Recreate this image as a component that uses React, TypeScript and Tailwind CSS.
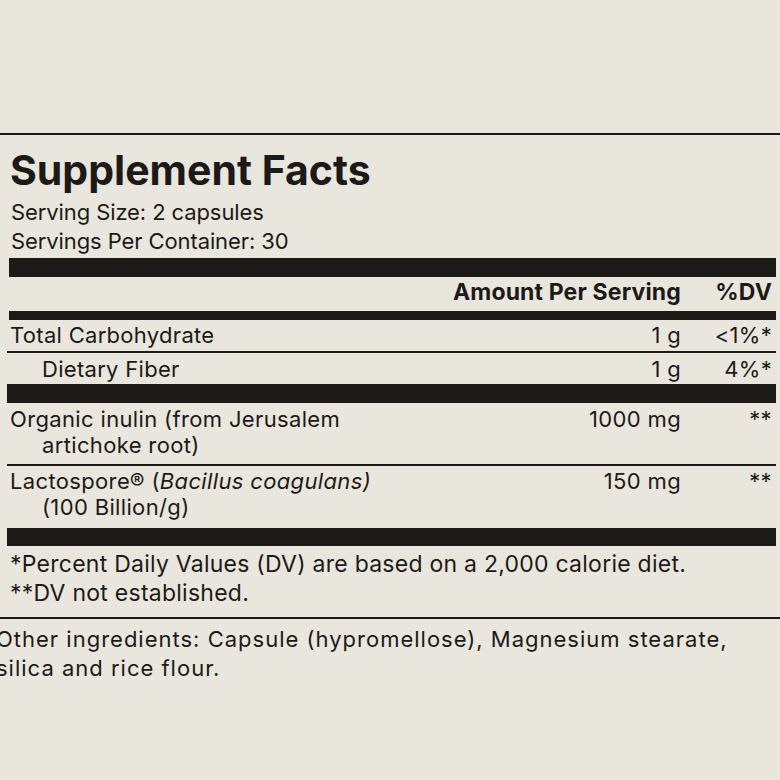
const INK = "text-[#1c1a17]";

function NutrientRow({
  name,
  amount,
  dv,
  indent,
  pad,
}: {
  name: string;
  amount: string;
  dv: string;
  indent?: boolean;
  pad: string;
}) {
  return (
    <div className={`flex h-[31px] ${pad} text-[22px] leading-[31px] tracking-[0.3px]`}>
      <div className={`flex-1 ${indent ? "pl-[33px]" : "pl-[1px]"}`}>{name}</div>
      <div className="text-right">{amount}</div>
      <div className="w-[95px] pr-[4px] text-right">{dv}</div>
    </div>
  );
}

function TwoLineRow({
  first,
  second,
  amount,
  h,
  pad,
}: {
  first: React.ReactNode;
  second: React.ReactNode;
  amount: string;
  h: string;
  pad: string;
}) {
  return (
    <div className={`flex ${h} ${pad} text-[22px] leading-[26px] tracking-[0.35px]`}>
      <div className="flex-1 pl-[1px]">
        <div>{first}</div>
        <div className="pl-[32px]">{second}</div>
      </div>
      <div className="text-right">{amount}</div>
      <div className="w-[95px] pr-[4px] text-right">**</div>
    </div>
  );
}

export default function App() {
  return (
    <div
      className={`w-[780px] h-[780px] overflow-hidden bg-[#e9e6dd] ${INK}`}
      style={{ fontFamily: "Inter, 'Liberation Sans', sans-serif" }}
    >
      <div className="mt-[133px] border-t-2 border-[#1c1a17]">
        <div className="ml-[9px] mr-[4px]">
          <h1 className="pt-[15px] pl-[1px] text-[41px] leading-[40px] font-bold">
            Supplement Facts
          </h1>
          <div className="mt-[8px] pl-[2px] text-[22px] leading-[29px] tracking-[-0.1px]">
            <p>Serving Size: 2 capsules</p>
            <p>Servings Per Container: 30</p>
          </div>
          <div className="mt-[2px] h-[19px] bg-[#1c1a17]" />

          <div className="flex h-[34px] items-start text-[23px] leading-[30px] font-bold tracking-[0.15px]">
            <div className="flex-1" />
            <div>Amount Per Serving</div>
            <div className="w-[95px] pr-[4px] text-right">%DV</div>
          </div>
          <div className="h-[9px] bg-[#1c1a17]" />

          <NutrientRow name="Total Carbohydrate" amount="1 g" dv="<1%*" pad="" />
          <div className="-ml-[2px] h-[2px] bg-[#1c1a17]" />
          <NutrientRow name="Dietary Fiber" amount="1 g" dv="4%*" indent pad="pt-[1px]" />
          <div className="-ml-[2px] h-[19px] bg-[#1c1a17]" />

          <TwoLineRow
            first="Organic inulin (from Jerusalem"
            second="artichoke root)"
            amount="1000 mg"
            h="h-[61px]"
            pad="pt-[3px]"
          />
          <div className="-ml-[2px] h-[2px] bg-[#1c1a17]" />
          <TwoLineRow
            first={
              <>
                Lactospore® (<i>Bacillus coagulans)</i>
              </>
            }
            second="(100 Billion/g)"
            amount="150 mg"
            h="h-[62px]"
            pad="pt-[2px]"
          />
          <div className="-ml-[2px] h-[18px] bg-[#1c1a17]" />

          <div className="pt-[4px] pb-[9px] pl-[1px] text-[23px] leading-[29px] tracking-[0.25px]">
            <p>*Percent Daily Values (DV) are based on a 2,000 calorie diet.</p>
            <p>**DV not established.</p>
          </div>
        </div>
        <div className="h-[2px] bg-[#1c1a17]" />
        <div className="pt-[6px] -ml-[4px] text-[22px] leading-[29px] tracking-[1px]">
          <p>Other ingredients: Capsule (hypromellose), Magnesium stearate,</p>
          <p>silica and rice flour.</p>
        </div>
      </div>
    </div>
  );
}
